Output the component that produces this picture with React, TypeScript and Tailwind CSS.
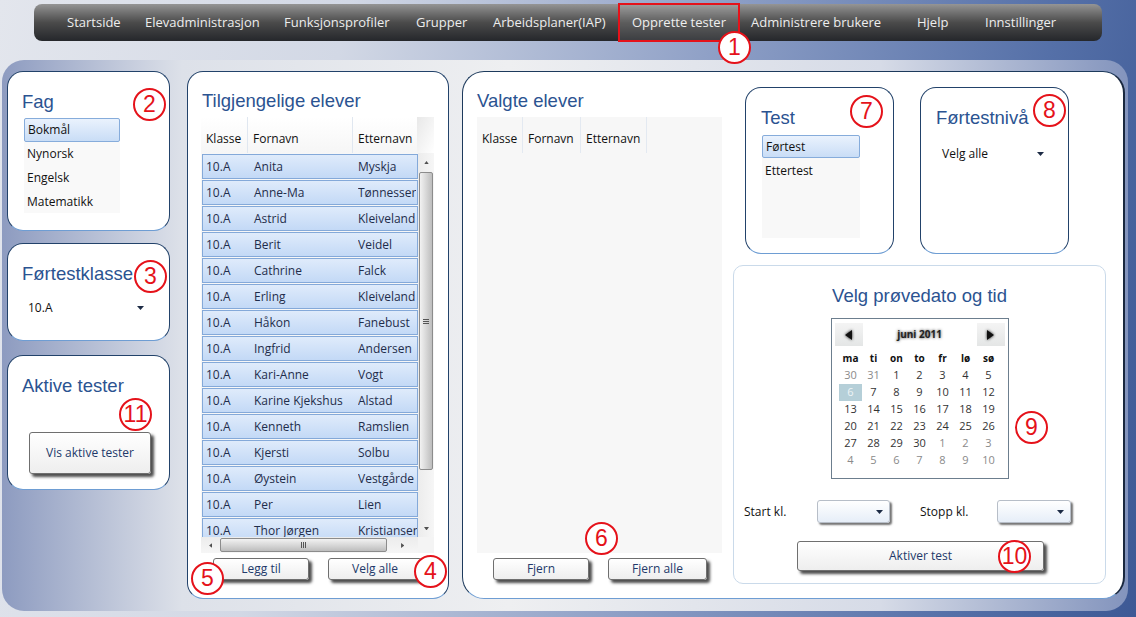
import React from 'react';

const students: [string, string][] = [
  ['Anita', 'Myskja'],
  ['Anne-Ma', 'Tønnesser'],
  ['Astrid', 'Kleiveland'],
  ['Berit', 'Veidel'],
  ['Cathrine', 'Falck'],
  ['Erling', 'Kleiveland'],
  ['Håkon', 'Fanebust'],
  ['Ingfrid', 'Andersen'],
  ['Kari-Anne', 'Vogt'],
  ['Karine Kjekshus', 'Alstad'],
  ['Kenneth', 'Ramslien'],
  ['Kjersti', 'Solbu'],
  ['Øystein', 'Vestgårde'],
  ['Per', 'Lien'],
  ['Thor Jørgen', 'Kristiansen'],
];

const navItems = [
  { label: 'Startside', w: 'w-[78px]' },
  { label: 'Elevadministrasjon', w: 'w-[139px]' },
  { label: 'Funksjonsprofiler', w: 'w-[132px]' },
  { label: 'Grupper', w: 'w-[77px]' },
  { label: 'Arbeidsplaner(IAP)', w: 'w-[139px]' },
  { label: 'Opprette tester', w: 'w-[119px]' },
  { label: 'Administrere brukere', w: 'w-[166px]' },
  { label: 'Hjelp', w: 'w-[68px]' },
  { label: 'Innstillinger', w: 'w-[100px]' },
];

const weeks: [number, boolean][][] = [
  [[30, true], [31, true], [1, false], [2, false], [3, false], [4, false], [5, false]],
  [[6, false], [7, false], [8, false], [9, false], [10, false], [11, false], [12, false]],
  [[13, false], [14, false], [15, false], [16, false], [17, false], [18, false], [19, false]],
  [[20, false], [21, false], [22, false], [23, false], [24, false], [25, false], [26, false]],
  [[27, false], [28, false], [29, false], [30, false], [1, true], [2, true], [3, true]],
  [[4, true], [5, true], [6, true], [7, true], [8, true], [9, true], [10, true]],
];

const titleFont = "font-['Liberation_Sans',Arial,sans-serif] text-[18.5px] leading-[22px] text-[#2b5391]";

function Marker({ n, className }: { n: string; className: string }) {
  return (
    <div
      className={`absolute w-[33px] h-[33px] rounded-full border-2 border-[#e5121a] bg-white flex items-center justify-center text-[#e5121a] text-[23px] leading-none font-['Liberation_Sans',Arial,sans-serif] ${className}`}
    >
      {n}
    </div>
  );
}

function Card({ className, children }: { className: string; children?: React.ReactNode }) {
  return (
    <div className={`bg-white rounded-[16px] border border-[#22426a] border-b-[#6e9dd3] ${className}`}>
      {children}
    </div>
  );
}

function Btn({ label, className }: { label: string; className: string }) {
  return (
    <div
      className={`flex items-center justify-center rounded-[3px] border border-[#6f6f6f] bg-gradient-to-b from-white to-[#eeeeee] shadow-[3px_3px_3px_rgba(0,0,0,0.7)] text-[12px] text-[#22396a] ${className}`}
    >
      {label}
    </div>
  );
}

function Caret({ className = '' }: { className?: string }) {
  return (
    <svg width="7" height="4" viewBox="0 0 7 4" className={className}>
      <path d="M0 0h7L3.5 4z" fill="#1d2b45" />
    </svg>
  );
}

function Tri({ dir, size = 5, color = '#505050' }: { dir: 'up' | 'down' | 'left' | 'right'; size?: number; color?: string }) {
  const d =
    dir === 'up' ? 'M0 4h6L3 0z' : dir === 'down' ? 'M0 0h6L3 4z' : dir === 'left' ? 'M4 0v6L0 3z' : 'M0 0v6L4 3z';
  const vb = dir === 'up' || dir === 'down' ? '0 0 6 4' : '0 0 4 6';
  const w = dir === 'up' || dir === 'down' ? size : size * 0.7;
  const h = dir === 'up' || dir === 'down' ? size * 0.7 : size;
  return (
    <svg width={w} height={h} viewBox={vb}>
      <path d={d} fill={color} />
    </svg>
  );
}

function SelectedItem({ label, h }: { label: string; h: string }) {
  return (
    <div
      className={`${h} flex items-center pl-[3px] rounded-[2px] border border-[#86acdb] bg-gradient-to-b from-[#eaf2fd] to-[#c9ddf6]`}
    >
      {label}
    </div>
  );
}

export default function App() {
  return (
    <div className="relative w-[1136px] h-[617px] overflow-hidden bg-[linear-gradient(100deg,#e3e6ed_0%,#d2d8e5_28%,#8a9cc4_60%,#5570a8_85%,#3d5995_100%)] font-['Open_Sans','Noto_Sans',sans-serif] text-[12px] text-[#111]">
      {/* top menu */}
      <div className="ml-[34px] mt-[4px] w-[1068px] h-[37px] rounded-[8px] bg-gradient-to-b from-[#959595] via-[#4b4b4b] to-[#25272b] flex items-center pl-[33px]">
        {navItems.map(item => (
          <div key={item.label} className={`${item.w} text-[13px] text-[#ededed] whitespace-nowrap`}>
            {item.label}
          </div>
        ))}
      </div>

      {/* main panel */}
      <div className="ml-[2px] mt-[19px] w-[1126px] h-[551px] rounded-[22px] bg-[linear-gradient(to_right,#8d9bc0_0%,#dde1e9_16%,#eeeff1_45%,#d6dbe7_78%,#8394bd_100%)] flex pl-[5px] pt-[11px]">
        {/* left column */}
        <div className="w-[163px] flex flex-col">
          <Card className="h-[160px] pt-[19px] pl-[14px]">
            <div className={titleFont}>Fag</div>
            <div className="ml-[2px] mt-[5px] w-[96px] h-[95px] bg-[#f9f9f9]">
              <SelectedItem label="Bokmål" h="h-[24px]" />
              <div className="h-[24px] flex items-center pl-[3px]">Nynorsk</div>
              <div className="h-[24px] flex items-center pl-[3px]">Engelsk</div>
              <div className="h-[23px] flex items-center pl-[3px]">Matematikk</div>
            </div>
          </Card>
          <Card className="mt-[12px] h-[98px] pt-[19px] pl-[14px]">
            <div className={titleFont}>Førtestklasse</div>
            <div className="mt-[12px] w-[126px] h-[22px] flex items-center justify-between pl-[6px] pr-[4px]">
              <span>10.A</span>
              <Caret />
            </div>
          </Card>
          <Card className="mt-[14px] h-[135px] pt-[19px] pl-[14px]">
            <div className={titleFont}>Aktive tester</div>
            <Btn label="Vis aktive tester" className="ml-[7px] mt-[35px] w-[122px] h-[42px]" />
          </Card>
        </div>

        {/* available students */}
        <Card className="ml-[17px] w-[262px] h-[528px] pt-[18px] pl-[13px]">
          <div className={`${titleFont} ml-[1px]`}>Tilgjengelige elever</div>
          <div className="mt-[5px] w-[233px] h-[436px] bg-[#f7f7f7] flex flex-col">
            <div className="h-[36px] flex bg-gradient-to-b from-white to-[#f6f6f6]">
              <div className="w-[47px] pl-[5px] pt-[13px] border-r border-[#e0e7f0]">Klasse</div>
              <div className="w-[105px] pl-[5px] pt-[13px] border-r border-[#e0e7f0]">Fornavn</div>
              <div className="w-[64px] pl-[5px] pt-[13px]">Etternavn</div>
              <div className="flex-1 bg-gradient-to-br from-[#e8e8e8] to-white" />
            </div>
            <div className="h-[384px] flex">
              <div className="w-[217px] pl-[1px] pt-[1px] overflow-hidden">
                {students.map(([first, last]) => (
                  <div
                    key={first}
                    className="w-[216px] h-[25px] mb-[1px] flex items-center border border-[#84a9d9] bg-gradient-to-b from-[#dfebfb] to-[#c3d9f6] text-[#1f2d4b] whitespace-nowrap"
                  >
                    <span className="w-[51px] pl-[3px] shrink-0">10.A</span>
                    <span className="w-[104px] shrink-0">{first}</span>
                    <span className="overflow-hidden">{last}</span>
                  </div>
                ))}
              </div>
              {/* vertical scrollbar */}
              <div className="w-[16px] h-full bg-gradient-to-r from-[#ececec] to-[#f6f6f6] flex flex-col items-center">
                <div className="h-[19px] flex items-center justify-center">
                  <Tri dir="up" />
                </div>
                <div className="w-[14px] h-[298px] rounded-[2px] border border-[#8c8c8c] bg-gradient-to-r from-[#f2f2f2] via-[#d8d8d8] to-[#bdbdbd] flex flex-col items-center justify-center gap-[1px]">
                  <div className="w-[6px] h-[1px] bg-[#555]" />
                  <div className="w-[6px] h-[1px] bg-[#555]" />
                  <div className="w-[6px] h-[1px] bg-[#555]" />
                </div>
                <div className="flex-1 flex items-end pb-[7px]">
                  <Tri dir="down" />
                </div>
              </div>
            </div>
            {/* horizontal scrollbar */}
            <div className="h-[16px] flex">
              <div className="w-[217px] h-full bg-gradient-to-b from-[#ececec] to-[#f6f6f6] flex items-center">
                <div className="w-[19px] flex justify-center">
                  <Tri dir="left" />
                </div>
                <div className="w-[167px] h-[14px] rounded-[2px] border border-[#8c8c8c] bg-gradient-to-b from-[#f2f2f2] via-[#d8d8d8] to-[#bdbdbd] flex items-center justify-center gap-[1px]">
                  <div className="w-[1px] h-[6px] bg-[#555]" />
                  <div className="w-[1px] h-[6px] bg-[#555]" />
                  <div className="w-[1px] h-[6px] bg-[#555]" />
                </div>
                <div className="flex-1 flex justify-center">
                  <Tri dir="right" />
                </div>
              </div>
              <div className="flex-1 bg-[#f4f4f4]" />
            </div>
          </div>
          <div className="mt-[5px] flex">
            <Btn label="Legg til" className="ml-[12px] w-[96px] h-[22px]" />
            <Btn label="Velg alle" className="ml-[19px] w-[94px] h-[22px]" />
          </div>
        </Card>

        {/* selected students and test setup */}
        <div className="ml-[13px] w-[663px] h-[528px] bg-white rounded-[22px] border border-[#1d3a5c] border-r-2 border-r-[#19283f] border-b-[#6e9dd3] flex pl-[14px] pt-[18px]">
          <div className="w-[245px]">
            <div className={titleFont}>Valgte elever</div>
            <div className="mt-[5px] w-[245px] h-[436px] bg-[#f7f7f7]">
              <div className="h-[36px] flex">
                <div className="w-[46px] pl-[5px] pt-[13px] border-r border-[#e3e9f1]">Klasse</div>
                <div className="w-[58px] pl-[5px] pt-[13px] border-r border-[#e3e9f1]">Fornavn</div>
                <div className="w-[66px] pl-[5px] pt-[13px] border-r border-[#e3e9f1]">Etternavn</div>
              </div>
            </div>
            <div className="mt-[5px] flex">
              <Btn label="Fjern" className="ml-[16px] w-[96px] h-[22px]" />
              <Btn label="Fjern alle" className="ml-[19px] w-[99px] h-[22px]" />
            </div>
          </div>

          <div className="ml-[11px] w-[373px] -mt-[3px]">
            <div className="flex">
              <Card className="ml-[12px] w-[149px] h-[167px] pt-[19px] pl-[15px]">
                <div className={titleFont}>Test</div>
                <div className="ml-[1px] mt-[6px] w-[98px] h-[103px] bg-[#f8f8f8]">
                  <SelectedItem label="Førtest" h="h-[23px]" />
                  <div className="h-[25px] flex items-center pl-[3px]">Ettertest</div>
                </div>
              </Card>
              <Card className="ml-[26px] w-[149px] h-[167px] pt-[19px] pl-[15px]">
                <div className={titleFont}>Førtestnivå</div>
                <div className="mt-[14px] w-[114px] h-[22px] flex items-center justify-between pl-[6px] pr-[6px]">
                  <span>Velg alle</span>
                  <Caret />
                </div>
              </Card>
            </div>

            <div className="mt-[11px] w-[373px] h-[319px] rounded-[10px] border border-[#cadaea] bg-white pt-[19px] flex flex-col">
              <div className={`${titleFont} text-center`}>Velg prøvedato og tid</div>
              <div className="mt-[11px] mx-auto w-[178px] h-[161px] border border-[#6c7e8e] px-[7px] pt-[4px]">
                <div className="h-[23px] flex items-center justify-between -mx-[4px]">
                  <div className="w-[28px] h-[23px] bg-gradient-to-b from-[#f4f4f4] to-[#e4e6e6] flex items-center justify-center">
                    <svg width="7" height="10" viewBox="0 0 7 10" className="drop-shadow-[0_0_1.5px_rgba(0,0,0,0.9)]">
                      <path d="M7 0v10L0 5z" fill="#111" />
                    </svg>
                  </div>
                  <div className="text-[10px] font-bold text-[#222] [text-shadow:0_0_3px_rgba(0,0,0,0.8)]">
                    juni 2011
                  </div>
                  <div className="w-[28px] h-[23px] bg-gradient-to-b from-[#f4f4f4] to-[#e4e6e6] flex items-center justify-center">
                    <svg width="7" height="10" viewBox="0 0 7 10" className="drop-shadow-[0_0_1.5px_rgba(0,0,0,0.9)]">
                      <path d="M0 0v10L7 5z" fill="#111" />
                    </svg>
                  </div>
                </div>
                <div className="mt-[4px] w-[161px] mx-auto grid grid-cols-7 text-[10px] font-bold text-[#111]">
                  {['ma', 'ti', 'on', 'to', 'fr', 'lø', 'sø'].map(d => (
                    <div key={d} className="h-[17px] flex items-center justify-center">
                      {d}
                    </div>
                  ))}
                </div>
                <div className="w-[161px] mx-auto grid grid-cols-7 text-[11px]">
                  {weeks.flat().map(([d, other], i) => (
                    <div
                      key={i}
                      className={
                        i === 7
                          ? 'h-[17px] flex items-center justify-center bg-[#b5cfd8] text-[#eef4f6]'
                          : other
                          ? 'h-[17px] flex items-center justify-center text-[#8a8a8a]'
                          : 'h-[17px] flex items-center justify-center text-[#333]'
                      }
                    >
                      {d}
                    </div>
                  ))}
                </div>
              </div>

              <div className="mt-[21px] ml-[10px] h-[23px] flex items-center">
                <span className="w-[73px]">Start kl.</span>
                <div className="w-[73px] h-[23px] rounded-[3px] border border-[#b7bec8] bg-gradient-to-b from-white to-[#e6eef8] shadow-[2px_2px_2px_rgba(0,0,0,0.55)] flex items-center justify-end pr-[6px]">
                  <Caret />
                </div>
                <span className="ml-[30px] w-[77px]">Stopp kl.</span>
                <div className="w-[74px] h-[23px] rounded-[3px] border border-[#b7bec8] bg-gradient-to-b from-white to-[#e6eef8] shadow-[2px_2px_2px_rgba(0,0,0,0.55)] flex items-center justify-end pr-[6px]">
                  <Caret />
                </div>
              </div>
              <Btn label="Aktiver test" className="mt-[18px] ml-[63px] w-[247px] h-[30px]" />
            </div>
          </div>
        </div>
      </div>

      {/* highlighted menu item */}
      <div className="absolute left-[619px] top-[5px] w-[120px] h-[36px] bg-white/10" />
      <div className="absolute left-[618px] top-[3px] w-[122px] h-[39px] border-2 border-[#e5121a]" />

      {/* annotation markers */}
      <Marker n="1" className="left-[718px] top-[31px]" />
      <Marker n="2" className="left-[133px] top-[88px]" />
      <Marker n="3" className="left-[134px] top-[260px]" />
      <Marker n="11" className="left-[119px] top-[398px]" />
      <Marker n="5" className="left-[191px] top-[562px]" />
      <Marker n="4" className="left-[414px] top-[555px]" />
      <Marker n="6" className="left-[585px] top-[522px]" />
      <Marker n="7" className="left-[850px] top-[95px]" />
      <Marker n="8" className="left-[1033px] top-[94px]" />
      <Marker n="9" className="left-[1015px] top-[411px]" />
      <Marker n="10" className="left-[998px] top-[540px]" />
    </div>
  );
}
